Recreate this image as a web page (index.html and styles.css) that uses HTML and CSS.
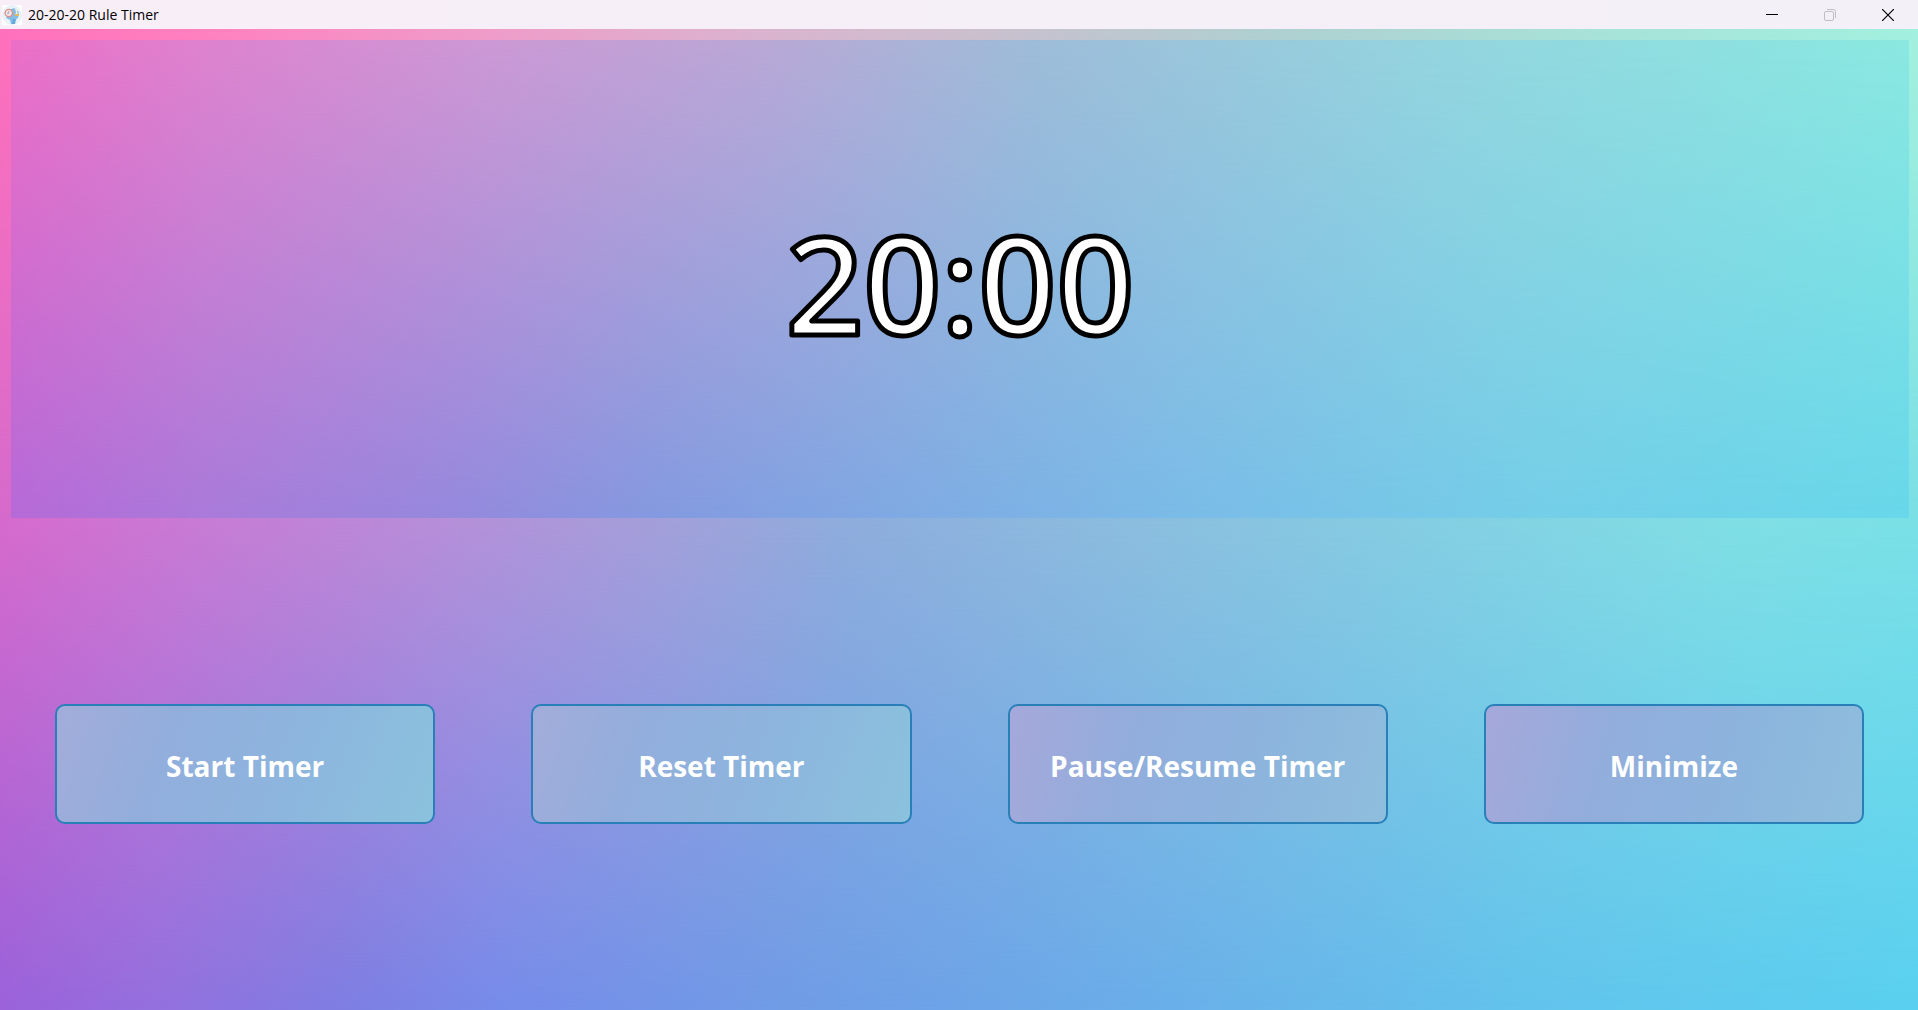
FILE: index.html
```html
<!DOCTYPE html>
<html lang="en">
<head>
<meta charset="utf-8">
<title>20-20-20 Rule Timer</title>
<link rel="stylesheet" href="styles.css">
</head>
<body>
<header class="titlebar">
  <svg class="app-icon" width="20" height="20" viewBox="0 0 20 20" aria-hidden="true">
    <rect width="20" height="20" fill="#fdfdfe"/>
    <circle cx="10" cy="10" r="9.3" fill="#e8f3fa" stroke="#d3e3ee" stroke-width=".7" stroke-dasharray="2 1"/>
    <path d="M8 5q3-3 6-1 3 2 3 6-1 4-4 5l-1 4H9l-1-4-4-2z" fill="#83bde6"/>
    <path d="M11 14h3l-1 5h-3z" fill="#65a9dc"/>
    <circle cx="6.800" cy="8" r="3.700" fill="#f5e6e6" stroke="#dc8e85" stroke-width="1.300"/>
    <path d="M6.800 6v2.300H5" fill="none" stroke="#8899b5" stroke-width=".8"/>
    <path d="M13 4h3l-1 3 2 4h-4l1-4z" fill="#edf0de"/>
    <path d="M13 9h4v2h-4z" fill="#e8b85c"/>
  </svg>
  <h1 class="title">20-20-20 Rule Timer</h1>
  <div class="window-controls">
    <button class="window-button" type="button" aria-label="Minimize window">
      <svg width="12" height="12" viewBox="0 0 12 12"><path d="M0 5.500h12" stroke="#000"/></svg>
    </button>
    <button class="window-button" type="button" aria-label="Restore window" disabled>
      <svg width="12" height="12" viewBox="0 0 12 12" fill="none" stroke="#c1bdc5"><rect x=".5" y="2.500" width="9" height="9" rx="1.500"/><path d="M3 .5h6.500q2 0 2 2V9"/></svg>
    </button>
    <button class="window-button" type="button" aria-label="Close window">
      <svg width="12" height="12" viewBox="0 0 12 12"><path d="M0 0l12 12M12 0L0 12" stroke="#000" stroke-width="1.200"/></svg>
    </button>
  </div>
</header>
<main class="timer">
  <section class="display">
    <svg class="clock" viewBox="0 0 360 150" role="timer" aria-label="Time remaining">
      <text class="clock-text" x="180" y="131" text-anchor="middle">20:00</text>
    </svg>
  </section>
  <section class="actions">
    <button class="action" type="button">Start Timer</button>
    <button class="action" type="button">Reset Timer</button>
    <button class="action action-violet" type="button">Pause/Resume Timer</button>
    <button class="action action-violet" type="button">Minimize</button>
  </section>
</main>
</body>
</html>
```
FILE: styles.css
```css
* {
  box-sizing: border-box;
}

body {
  margin: 0;
  min-height: 100vh;
  display: flex;
  flex-direction: column;
  font-family: "Segoe UI", "Open Sans", "Noto Sans", sans-serif;
}

.titlebar {
  height: 29px;
  display: flex;
  align-items: center;
  padding: 0 1px 0 2px;
  gap: 6px;
  background: linear-gradient(90deg, #f8eef7, #f3f0f8);
}

.title {
  margin: 0;
  font-size: 14px;
  font-weight: 400;
  line-height: 28px;
  color: #000;
}

.window-controls {
  display: flex;
  align-self: stretch;
  margin-left: auto;
}

.window-button {
  width: 58px;
  padding: 0;
  border: 0;
  background: none;
  display: flex;
  align-items: center;
  justify-content: center;
}

.window-button svg {
  display: block;
}

/* The page colours are horizontal blends stacked top, middle and bottom,
   each fading into the one below through a mask. */
.timer {
  flex: 1;
  position: relative;
  isolation: isolate;
  display: grid;
  grid-template-rows: 1fr 1fr;
  gap: 7px;
  padding: 11px 9px 7px 11px;
  background: linear-gradient(90deg, rgb(155, 98, 218), rgb(148, 112, 222) 8%, rgb(126, 126, 226) 18%, rgb(118, 140, 234) 26%, rgb(112, 155, 230) 40%, rgb(108, 166, 232) 52%, rgb(104, 180, 234) 65%, rgb(98, 196, 236) 80%, rgb(90, 208, 240));
}

.timer::before,
.timer::after,
.display::before {
  content: "";
  position: absolute;
  inset: 0;
  z-index: -1;
}

.timer::before {
  background: linear-gradient(90deg, rgb(214, 106, 204), rgb(200, 122, 212) 10%, rgb(182, 142, 216) 23%, rgb(162, 160, 218) 35%, rgb(142, 172, 220) 44%, rgb(139, 190, 222) 60%, rgb(132, 206, 226) 75%, rgb(128, 222, 228) 90%, rgb(122, 224, 230));
  mask-image: linear-gradient(#000 50%, transparent);
}

.timer::after {
  background: linear-gradient(90deg, rgb(255, 112, 187), rgb(255, 128, 190) 10%, rgb(240, 155, 200) 25%, rgb(218, 180, 206) 40%, rgb(205, 190, 205) 50%, rgb(175, 207, 208) 66%, rgb(167, 226, 216) 83%, rgb(163, 240, 222));
  mask-image: linear-gradient(#000, transparent 50%);
}

.display {
  position: relative;
  isolation: isolate;
  display: flex;
  align-items: center;
  justify-content: center;
  background: linear-gradient(90deg, rgb(182, 106, 216), rgb(170, 122, 218) 10%, rgb(148, 138, 222) 24%, rgb(132, 154, 224) 34%, rgb(126, 174, 228) 50%, rgb(122, 188, 232) 62%, rgb(116, 206, 232) 80%, rgb(104, 216, 234));
}

.display::before {
  background: linear-gradient(90deg, rgb(236, 110, 198), rgb(222, 130, 206) 10%, rgb(204, 152, 212) 25%, rgb(184, 168, 214) 40%, rgb(158, 188, 216) 54%, rgb(148, 212, 222) 75%, rgb(138, 232, 224));
  mask-image: linear-gradient(#000, transparent);
}

.clock {
  width: 360px;
  height: 150px;
  overflow: visible;
}

.clock-text {
  font-size: 136px;
  font-weight: 550;
  fill: #fff;
  stroke: #000;
  stroke-width: 5px;
  stroke-linejoin: round;
}

.actions {
  display: grid;
  grid-template-columns: repeat(4, 1fr);
  align-items: center;
  gap: 96px;
  padding: 0 45px 0 44px;
}

.action {
  height: 120px;
  padding: 4px 0 0;
  border: 2px solid #2980b9;
  border-radius: 10px;
  background: linear-gradient(110deg, rgb(163, 172, 218), rgb(146, 174, 220) 30%, rgb(140, 182, 222) 65%, rgb(139, 194, 221));
  background-origin: border-box;
  color: #fff;
  font: inherit;
  font-size: 28px;
  font-weight: 700;
}

.action-violet {
  background-image: linear-gradient(105deg, rgb(166, 168, 218), rgb(146, 173, 220) 32%, rgb(140, 180, 221) 65%, rgb(142, 190, 221));
}
```
